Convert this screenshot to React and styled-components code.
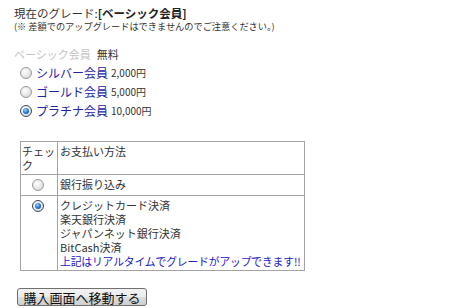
import React from "react";
import styled, { createGlobalStyle, css } from "styled-components";

const Global = createGlobalStyle`
  html, body { margin: 0; padding: 0; background: #fff; }
  body { font-family: "Noto Sans CJK JP", "Noto Sans", sans-serif; color: #333; }
`;

const Page = styled.div`
  padding: 5px 14px 0 14px;
  display: flex;
  flex-direction: column;
  align-items: flex-start;
`;

const CurrentGrade = styled.div`
  font-size: 11.5px;
  line-height: 16px;
  color: #333;
  b { font-weight: bold; color: #222; }
`;

const Note = styled.div`
  font-size: 9.2px;
  line-height: 11px;
  color: #333;
`;

const GradeList = styled.div`
  margin-top: 12px;
  display: flex;
  flex-direction: column;
`;

const GradeRow = styled.label`
  display: flex;
  align-items: center;
  height: 19px;
  gap: 4px;
  padding-left: ${(p) => (p.$indent ? "6px" : "0")};
`;

const GradeName = styled.span`
  font-size: ${(p) => (p.$disabled ? "11px" : "12px")};
  color: ${(p) => (p.$disabled ? "#c4c4c4" : "#2424a8")};
`;

const Price = styled.span`
  font-size: ${(p) => (p.$big ? "11px" : "10px")};
  color: #333;
  margin-left: ${(p) => (p.$big ? "2px" : "-1px")};
`;

const Radio = styled.span`
  display: inline-block;
  flex: none;
  width: 12px;
  height: 12px;
  border-radius: 50%;
  border: 1px solid #9a9a9a;
  background: radial-gradient(circle at 40% 35%, #ffffff 0%, #e6e6e6 55%, #cfcfcf 100%);
  box-sizing: border-box;
  position: relative;
  vertical-align: top;
  ${(p) =>
    p.$checked &&
    css`
      border-color: #3c4a5c;
      &::after {
        content: "";
        position: absolute;
        left: 2px;
        top: 2px;
        width: 6px;
        height: 6px;
        border-radius: 50%;
        background: radial-gradient(circle at 40% 35%, #9fd2ff 0%, #2a7bd0 50%, #0d3f80 100%);
      }
    `}
`;

const Table = styled.table`
  margin-top: 21px;
  margin-left: 6px;
  border-collapse: collapse;
  width: 285px;
  font-size: 11px;
  line-height: 14px;
  color: #333;
  td {
    border: 1px solid #a4a4a4;
    vertical-align: top;
    padding: 2px 2px;
  }
`;

const CheckCell = styled.td`
  width: 33px;
  text-align: ${(p) => (p.$center ? "center" : "left")};
  && { padding: ${(p) => (p.$center ? "4px 3px 2px 0" : "2px 1px")}; }
`;

const MethodLine = styled.div`
  white-space: nowrap;
  height: 14px;
`;

const RealTime = styled(MethodLine)`
  color: #2020c8;
  font-size: 10.8px;
  letter-spacing: -0.15px;
`;

const Button = styled.button`
  margin-top: 17px;
  margin-left: 3px;
  font-family: "Noto Sans CJK JP", sans-serif;
  font-size: 13px;
  line-height: 15px;
  color: #111;
  padding: 0 2px;
  height: 18px;
  width: 130px;
  border: 1px solid #707070;
  border-radius: 3px;
  background: linear-gradient(#f2f2f2 0%, #ebebeb 50%, #dddddd 51%, #cfcfcf 100%);
`;

const methods = ["クレジットカード決済", "楽天銀行決済", "ジャパンネット銀行決済", "BitCash決済"];

export default function App() {
  return (
    <>
      <Global />
      <Page>
        <CurrentGrade>
          現在のグレード:<b>[ベーシック会員]</b>
        </CurrentGrade>
        <Note>(※ 差額でのアップグレードはできませんのでご注意ください。)</Note>
        <GradeList>
          <GradeRow>
            <GradeName $disabled>ベーシック会員</GradeName>
            <Price $big>無料</Price>
          </GradeRow>
          <GradeRow $indent>
            <Radio />
            <GradeName>シルバー会員</GradeName>
            <Price>2,000円</Price>
          </GradeRow>
          <GradeRow $indent>
            <Radio />
            <GradeName>ゴールド会員</GradeName>
            <Price>5,000円</Price>
          </GradeRow>
          <GradeRow $indent>
            <Radio $checked />
            <GradeName>プラチナ会員</GradeName>
            <Price>10,000円</Price>
          </GradeRow>
        </GradeList>
        <Table>
          <tbody>
            <tr>
              <CheckCell>チェック</CheckCell>
              <td>お支払い方法</td>
            </tr>
            <tr>
              <CheckCell $center>
                <Radio />
              </CheckCell>
              <td>銀行振り込み</td>
            </tr>
            <tr>
              <CheckCell $center>
                <Radio $checked />
              </CheckCell>
              <td>
                {methods.map((m) => (
                  <MethodLine key={m}>{m}</MethodLine>
                ))}
                <RealTime>上記はリアルタイムでグレードがアップできます!!</RealTime>
              </td>
            </tr>
          </tbody>
        </Table>
        <Button>購入画面へ移動する</Button>
      </Page>
    </>
  );
}
